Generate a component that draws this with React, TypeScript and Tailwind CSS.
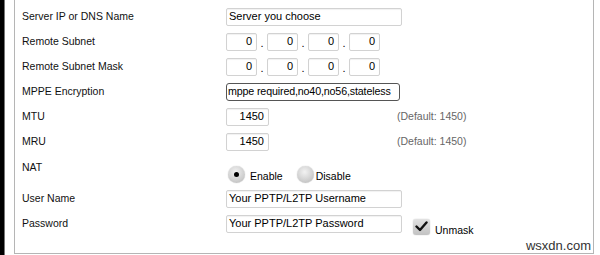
import React from "react";

const font = "font-['Liberation_Sans',Arial,sans-serif]";

function Label({ children, className = "" }: { children: React.ReactNode; className?: string }) {
  return <div className={`w-[204px] shrink-0 text-[10.5px] text-[#111] ${className}`}>{children}</div>;
}

function TextBox({ value, w = "w-[176px]", align = "left", dark = false }: { value: string; w?: string; align?: "left" | "right"; dark?: boolean }) {
  return (
    <div
      className={`${w} h-[18px] shrink-0 flex items-center bg-white leading-none text-black whitespace-nowrap overflow-hidden ${
        dark
          ? "border border-[#555] rounded-[3px] pl-[1px] text-[10.7px] tracking-[-0.15px]"
          : "border border-[#d2d2d2] rounded-[2px] shadow-[inset_0_1px_1px_rgba(0,0,0,0.06)] text-[11px]"
      } ${align === "right" ? "justify-end pr-[4px]" : dark ? "" : "pl-[2px]"}`}
    >
      {value}
    </div>
  );
}

function IpRow() {
  return (
    <div className="flex items-center">
      {[0, 1, 2, 3].map((i) => (
        <div key={i} className="flex items-center">
          <TextBox value="0" w="w-[31px]" align="right" />
          {i < 3 && <span className="w-[10px] text-center text-[11px] leading-none pt-[4px]">.</span>}
        </div>
      ))}
    </div>
  );
}

function Radio({ checked }: { checked?: boolean }) {
  return (
    <span className="w-[17px] h-[17px] rounded-full flex items-center justify-center bg-[radial-gradient(circle_at_45%_35%,#f2f2f2,#cfcfcf_60%,#b4b4b4)] shadow-[0_0_1px_rgba(0,0,0,0.3)]">
      {checked && <span className="w-[5px] h-[5px] rounded-full bg-black" />}
    </span>
  );
}

export default function App() {
  return (
    <div className={`w-[600px] h-[255px] bg-white flex overflow-hidden ${font}`}>
      <div className="w-[4px] h-full bg-black shrink-0" />
      <div className="w-[1px] h-full bg-[#777] shrink-0" />
      <div className="flex-1 pl-[9px] pr-[6px]">
        <div className="relative h-[254px] border-l border-r border-b border-[#b5b5b5] pl-[7px] pt-[4px]">
          <div className="flex h-[25px] items-center">
            <Label>Server IP or DNS Name</Label>
            <TextBox value="Server you choose" />
          </div>
          <div className="flex h-[25px] items-center">
            <Label>Remote Subnet</Label>
            <IpRow />
          </div>
          <div className="flex h-[25px] items-center">
            <Label>Remote Subnet Mask</Label>
            <IpRow />
          </div>
          <div className="flex h-[25px] items-center">
            <Label>MPPE Encryption</Label>
            <TextBox value="mppe required,no40,no56,stateless" w="w-[174px]" dark />
          </div>
          <div className="flex h-[25px] items-center">
            <Label>MTU</Label>
            <div className="w-[171px] shrink-0">
              <TextBox value="1450" w="w-[43px]" align="right" />
            </div>
            <span className="text-[10.5px] text-[#666]">(Default: 1450)</span>
          </div>
          <div className="flex h-[25px] items-center">
            <Label>MRU</Label>
            <div className="w-[171px] shrink-0">
              <TextBox value="1450" w="w-[43px]" align="right" />
            </div>
            <span className="text-[10.5px] text-[#666]">(Default: 1450)</span>
          </div>
          <div className="flex h-[32px] items-start">
            <Label className="mt-[6px]">NAT</Label>
            <div className="flex items-center mt-[11px] pl-[2px]">
              <Radio checked />
              <span className="ml-[5px] text-[10.5px] pt-[4px]">Enable</span>
              <span className="ml-[14px]"><Radio /></span>
              <span className="ml-[2px] text-[10.5px] pt-[4px]">Disable</span>
            </div>
          </div>
          <div className="flex h-[25px] items-center">
            <Label>User Name</Label>
            <TextBox value="Your PPTP/L2TP Username" />
          </div>
          <div className="flex h-[25px] items-center">
            <Label>Password</Label>
            <TextBox value="Your PPTP/L2TP Password" />
            <span className="ml-[11px] mt-[6px] w-[17px] h-[16px] rounded-[3px] bg-[linear-gradient(#e2e2e2,#c2c2c2)] flex items-center justify-center shadow-[0_0_1px_rgba(0,0,0,0.35)]">
              <svg width="13" height="11" viewBox="0 0 13 11">
                <path d="M1.5 5.5 L5 9 L11.5 1.5" fill="none" stroke="#111" strokeWidth="2.4" strokeLinecap="round" strokeLinejoin="round" />
              </svg>
            </span>
            <span className="ml-[5px] mt-[14px] text-[10.5px]">Unmask</span>
          </div>
          <div className="absolute right-[2px] bottom-[1px] text-[13px] text-[#333] leading-none">wsxdn.com</div>
        </div>
      </div>
    </div>
  );
}
